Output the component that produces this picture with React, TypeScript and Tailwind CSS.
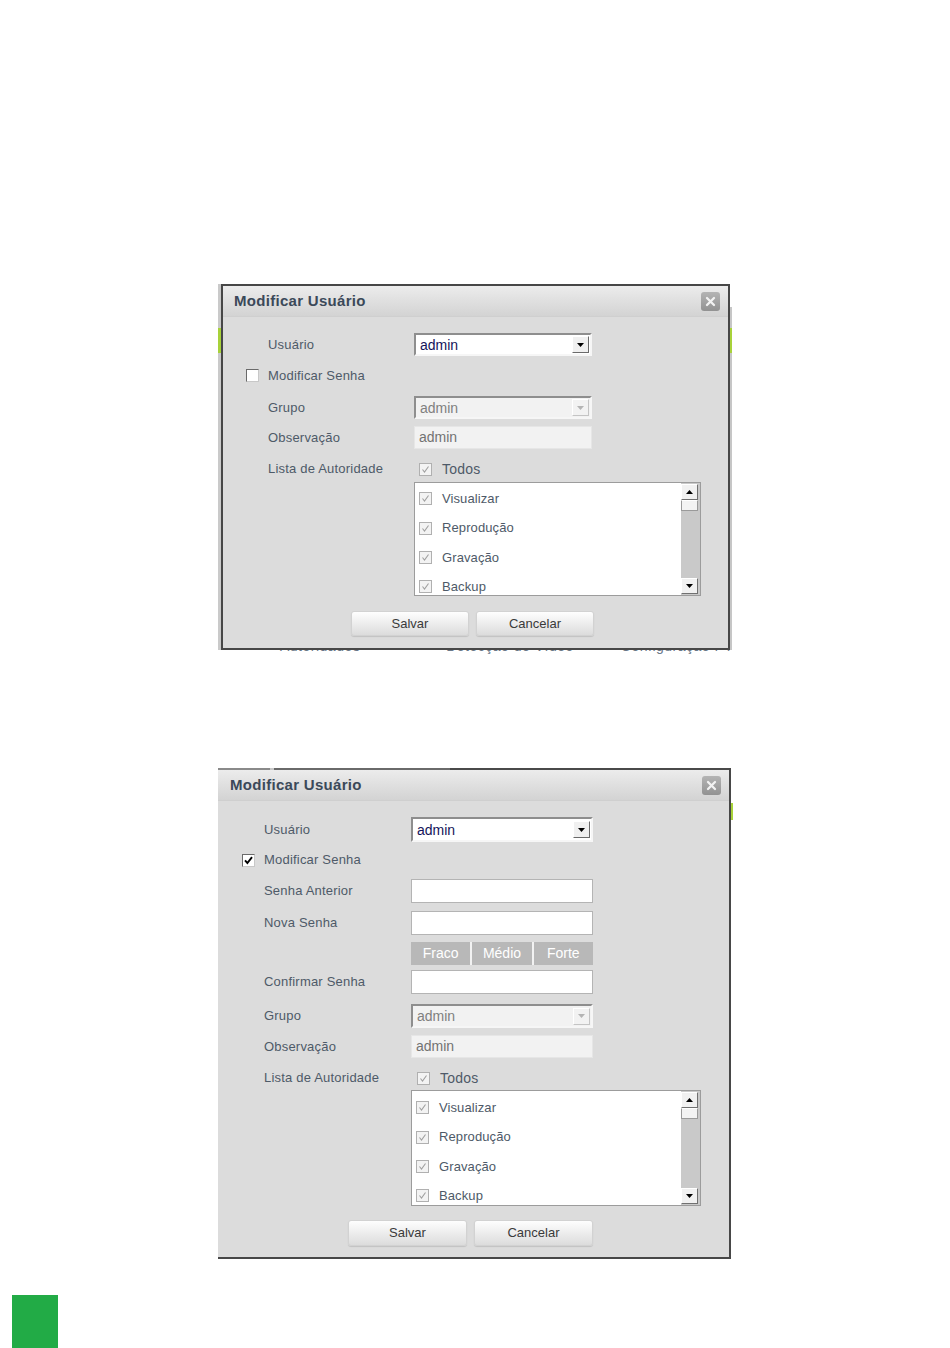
import React from "react";

const FONT = "font-['Liberation_Sans',Arial,sans-serif]";

function Checkbox({ checked = false, disabled = false }: { checked?: boolean; disabled?: boolean }) {
  return (
    <span
      className={`inline-flex h-[13px] w-[13px] shrink-0 items-center justify-center border ${
        disabled
          ? "border-[#b0b0b0] bg-[#f3f3f3]"
          : "border-[#6a6a6a] border-b-[#c8c8c8] border-r-[#c8c8c8] bg-white"
      }`}
    >
      {checked && (
        <svg width="9" height="9" viewBox="0 0 9 9">
          <path
            d={disabled ? "M1.5 4.5 L3.5 7 L7.5 1.5" : "M1 4.3 L3.4 7 L8 1.2"}
            fill="none"
            stroke={disabled ? "#a0a0a0" : "#000"}
            strokeWidth={disabled ? 1.1 : 1.9}
          />
        </svg>
      )}
    </span>
  );
}

function Arrow({ dir, color }: { dir: "up" | "down"; color: string }) {
  return (
    <svg width="7" height="4" viewBox="0 0 7 4">
      <path d={dir === "down" ? "M0 0 L7 0 L3.5 4 Z" : "M0 4 L7 4 L3.5 0 Z"} fill={color} />
    </svg>
  );
}

function Select({ value, disabled = false, cls }: { value: string; disabled?: boolean; cls: string }) {
  return (
    <div
      className={`flex items-center border-2 border-l-[#8e8e8e] border-t-[#8e8e8e] border-b-[#f6f6f6] border-r-[#f6f6f6] ${cls} ${
        disabled ? "bg-[#f2f2f2]" : "bg-white"
      }`}
    >
      <span className={`flex-1 pl-[4px] text-[14px] leading-none ${disabled ? "text-[#808080]" : "text-[#14145a]"}`}>
        {value}
      </span>
      <span
        className={`mr-[1px] flex h-[17px] w-[17px] items-center justify-center border ${
          disabled
            ? "border-[#ffffff] border-b-[#c4c4c4] border-r-[#c4c4c4] bg-[#f2f2f2]"
            : "border-white border-b-[#6a6a6a] border-r-[#6a6a6a] bg-[#f0f0f0]"
        }`}
      >
        <Arrow dir="down" color={disabled ? "#b4b4b4" : "#000"} />
      </span>
    </div>
  );
}

function TextBox({ cls }: { cls: string }) {
  return <div className={`border border-[#b4b4b4] bg-white ${cls}`} />;
}

function ReadBox({ value, cls }: { value: string; cls: string }) {
  return (
    <div className={`flex items-center border border-[#e6e6e6] bg-[#f2f2f2] pl-[4px] text-[14px] text-[#727272] ${cls}`}>
      {value}
    </div>
  );
}

function ScrollBtn({ dir }: { dir: "up" | "down" }) {
  return (
    <div className="flex h-[16px] w-[17px] items-center justify-center border border-white border-b-[#707070] border-r-[#707070] bg-[#f1f1f1]">
      <Arrow dir={dir} color="#000" />
    </div>
  );
}

function AuthList({ cls, pt }: { cls: string; pt: string }) {
  const items = ["Visualizar", "Reprodução", "Gravação", "Backup"];
  return (
    <div className={`flex border border-[#9c9c9c] bg-white ${cls}`}>
      <div className={`flex flex-1 flex-col overflow-hidden pl-[4px] ${pt}`}>
        {items.map((t) => (
          <div key={t} className="flex h-[29.4px] shrink-0 items-center gap-[10px]">
            <Checkbox checked disabled />
            <span className="text-[13px] tracking-[0.1px] text-[#4e5a68]">{t}</span>
          </div>
        ))}
      </div>
      <div className="flex w-[19px] flex-col bg-[#c9c9c9] py-[1px]">
        <ScrollBtn dir="up" />
        <div className="h-[11px] w-[17px] border border-[#9a9a9a] border-t-white bg-[#f3f3f3]" />
        <div className="flex-1" />
        <ScrollBtn dir="down" />
      </div>
    </div>
  );
}

function Btn({ label, cls }: { label: string; cls: string }) {
  return (
    <div
      className={`flex items-center justify-center rounded-[3px] border border-[#d2d2d2] bg-gradient-to-b from-[#fefefe] to-[#dcdcdc] text-[13px] text-[#3a3a3a] shadow-[0_1px_1px_rgba(0,0,0,0.12)] ${cls}`}
    >
      {label}
    </div>
  );
}

function CloseBtn() {
  return (
    <div className="flex h-[19px] w-[19px] items-center justify-center rounded-[3px] bg-gradient-to-b from-[#b4b4b4] to-[#929292]">
      <svg width="11" height="11" viewBox="0 0 11 11">
        <path d="M2 2 L9 9 M9 2 L2 9" stroke="#f2f2f2" strokeWidth="2.3" strokeLinecap="round" />
      </svg>
    </div>
  );
}

function Header({ pl }: { pl: string }) {
  return (
    <div
      className={`flex h-[31px] items-center justify-between border-b border-[#cfcfcf] bg-gradient-to-b from-[#ececec] to-[#d3d3d3] pr-[8px] ${pl}`}
    >
      <span className="text-[15px] font-bold tracking-[0.3px] text-[#3b4959]">Modificar Usuário</span>
      <CloseBtn />
    </div>
  );
}

function Label({ children, w }: { children: React.ReactNode; w: string }) {
  return <span className={`shrink-0 text-[13px] tracking-[0.2px] text-[#4e5a68] ${w}`}>{children}</span>;
}

function Dialog1() {
  const lab = "w-[146px]";
  return (
    <div className="ml-[218px] flex w-[514px]">
      <div className="flex w-[3px] flex-col bg-[#cacaca]">
        <div className="h-[44px]" />
        <div className="h-[25px] bg-[#a8d23a]" />
      </div>
      <div className="w-[509px] border-2 border-[#474747] bg-[#dcdcdc]">
        <Header pl="pl-[11px]" />
        <div className="pb-[12px] pt-[16px]">
          <div className="flex h-[23px] items-center pl-[45px]">
            <Label w={lab}>Usuário</Label>
            <Select value="admin" cls="h-[23px] w-[178px]" />
          </div>
          <div className="mt-[8px] flex h-[23px] items-center gap-[9px] pl-[23px]">
            <Checkbox />
            <Label w="">Modificar Senha</Label>
          </div>
          <div className="mt-[9px] flex h-[23px] items-center pl-[45px]">
            <Label w={lab}>Grupo</Label>
            <Select value="admin" disabled cls="h-[23px] w-[178px]" />
          </div>
          <div className="mt-[7px] flex h-[23px] items-center pl-[45px]">
            <Label w={lab}>Observação</Label>
            <ReadBox value="admin" cls="h-[23px] w-[178px]" />
          </div>
          <div className="mt-[9px] flex h-[22px] items-center pl-[45px]">
            <Label w={lab}>Lista de Autoridade</Label>
            <span className="ml-[5px] flex items-center gap-[10px]">
              <Checkbox checked disabled />
              <span className="text-[14px] tracking-[0.2px] text-[#4e5a68]">Todos</span>
            </span>
          </div>
          <div className="mt-[2px] pl-[191px]">
            <AuthList cls="h-[114px] w-[287px]" pt="pt-[1px]" />
          </div>
          <div className="mt-[15px] flex gap-[7px] pl-[128px]">
            <Btn label="Salvar" cls="h-[25px] w-[118px]" />
            <Btn label="Cancelar" cls="h-[25px] w-[118px]" />
          </div>
        </div>
      </div>
      <div className="flex w-[2px] flex-col">
        <div className="h-[23px]" />
        <div className="h-[21px] bg-[#c6c6c6]" />
        <div className="h-[25px] bg-[#a8d23a]" />
        <div className="flex-1 bg-[#c6c6c6]" />
      </div>
    </div>
  );
}

function Dialog2() {
  const lab = "w-[147px]";
  return (
    <div className="ml-[218px] flex w-[515px]">
      <div className="w-[513px] border-b-2 border-r-2 border-[#474747] bg-[#dcdcdc]">
        <div className="flex h-[2px]">
          <div className="w-[52px] bg-[#8a8a8a]" />
          <div className="w-[4px] bg-[#c8c8c8]" />
          <div className="w-[176px] bg-[#6a6a6a]" />
          <div className="flex-1 bg-[#4a4a4a]" />
        </div>
        <Header pl="pl-[12px]" />
        <div className="pb-[11px] pt-[16px]">
          <div className="flex h-[25px] items-center pl-[46px]">
            <Label w={lab}>Usuário</Label>
            <Select value="admin" cls="h-[25px] w-[182px]" />
          </div>
          <div className="mt-[7px] flex h-[22px] items-center gap-[9px] pl-[24px]">
            <Checkbox checked />
            <Label w="">Modificar Senha</Label>
          </div>
          <div className="mt-[8px] flex h-[24px] items-center pl-[46px]">
            <Label w={lab}>Senha Anterior</Label>
            <TextBox cls="h-[24px] w-[182px]" />
          </div>
          <div className="mt-[8px] flex h-[24px] items-center pl-[46px]">
            <Label w={lab}>Nova Senha</Label>
            <TextBox cls="h-[24px] w-[182px]" />
          </div>
          <div className="mt-[7px] flex h-[23px] items-center pl-[193px]">
            <div className="flex h-[23px] w-[182px] gap-[2px] bg-[#f2f2f2] text-[14px] text-white">
              <div className="flex flex-1 items-center justify-center bg-[#b8b8b8]">Fraco</div>
              <div className="flex flex-1 items-center justify-center bg-[#b8b8b8]">Médio</div>
              <div className="flex flex-1 items-center justify-center bg-[#b8b8b8]">Forte</div>
            </div>
          </div>
          <div className="mt-[5px] flex h-[24px] items-center pl-[46px]">
            <Label w={lab}>Confirmar Senha</Label>
            <TextBox cls="h-[24px] w-[182px]" />
          </div>
          <div className="mt-[10px] flex h-[24px] items-center pl-[46px]">
            <Label w={lab}>Grupo</Label>
            <Select value="admin" disabled cls="h-[24px] w-[182px]" />
          </div>
          <div className="mt-[7px] flex h-[23px] items-center pl-[46px]">
            <Label w={lab}>Observação</Label>
            <ReadBox value="admin" cls="h-[23px] w-[182px]" />
          </div>
          <div className="mt-[9px] flex h-[22px] items-center pl-[46px]">
            <Label w={lab}>Lista de Autoridade</Label>
            <span className="ml-[6px] flex items-center gap-[10px]">
              <Checkbox checked disabled />
              <span className="text-[14px] tracking-[0.2px] text-[#4e5a68]">Todos</span>
            </span>
          </div>
          <div className="mt-[1px] pl-[193px]">
            <AuthList cls="h-[116px] w-[290px]" pt="pt-[2px]" />
          </div>
          <div className="mt-[14px] flex gap-[7px] pl-[130px]">
            <Btn label="Salvar" cls="h-[26px] w-[119px]" />
            <Btn label="Cancelar" cls="h-[26px] w-[119px]" />
          </div>
        </div>
      </div>
      <div className="flex w-[2px] flex-col">
        <div className="h-[35px]" />
        <div className="h-[17px] bg-[#a8d23a]" />
      </div>
    </div>
  );
}

export default function App() {
  return (
    <div className={`min-h-[1348px] w-[950px] overflow-hidden bg-white pt-[284px] ${FONT}`}>
      <Dialog1 />
      <div className="ml-[218px] flex h-[4px] w-[513px] overflow-hidden text-[14px] leading-[15px] tracking-[0.5px] text-[#6a7888]">
        <div className="-mt-[11px] flex whitespace-nowrap pl-[62px]">
          <span>Autoridades</span>
          <span className="ml-[86px]">Detecção de Vídeo</span>
          <span className="ml-[47px]">Configuração PTZ</span>
        </div>
      </div>
      <div className="h-[114px]" />
      <Dialog2 />
      <div className="ml-[12px] mt-[36px] h-[53px] w-[46px] bg-[#22ab46]" />
    </div>
  );
}
